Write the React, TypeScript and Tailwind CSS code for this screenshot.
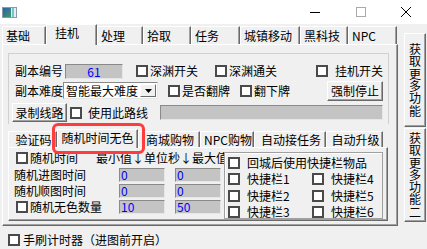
import React from "react";

const font = "font-['Noto_Sans_CJK_SC','Noto_Sans',sans-serif]";

const outerTabs = [
  { label: "基础", w: "w-[44px]" },
  { label: "挂机", w: "w-[51px]", active: true },
  { label: "处理", w: "w-[46px]" },
  { label: "拾取", w: "w-[48px]" },
  { label: "任务", w: "w-[49px]" },
  { label: "城镇移动", w: "w-[60px]" },
  { label: "黑科技", w: "w-[48px]" },
  { label: "NPC", w: "w-[49px]" },
];

const innerTabs = [
  { label: "验证码", w: "w-[49px]" },
  { label: "随机时间无色", w: "w-[81px]", active: true },
  { label: "商城购物", w: "w-[62px]" },
  { label: "NPC购物", w: "w-[54px]" },
  { label: "自动接任务", w: "w-[72px]" },
  { label: "自动升级", w: "w-[57px]" },
];

function Box() {
  return <span className="block w-[12px] h-[12px] shrink-0 border-2 border-[#4a4a4a] bg-white" />;
}

function Check({ label, className = "" }: { label: string; className?: string }) {
  return (
    <div className={"flex items-center whitespace-nowrap " + className}>
      <Box />
      <span>{label}</span>
    </div>
  );
}

function Field({ value, className = "" }: { value: string; className?: string }) {
  return (
    <div
      className={
        "h-[14px] bg-[#c4c4c4] border border-t-[#8a8a8a] border-l-[#8a8a8a] border-b-[#e6e6e6] border-r-[#e6e6e6] text-[#0000ff] text-[12px] leading-[12px] pl-[1px] " +
        className
      }
    >
      {value}
    </div>
  );
}

function Btn({ label, className = "" }: { label: string; className?: string }) {
  return (
    <div
      className={
        "flex items-center justify-center bg-[#f0f0f0] border border-t-white border-l-white border-b-[#696969] border-r-[#696969] shadow-[inset_-1px_-1px_0_#a0a0a0] " +
        className
      }
    >
      {label}
    </div>
  );
}

function TabStrip({ tabs, small }: { tabs: { label: string; w: string; active?: boolean }[]; small?: boolean }) {
  return (
    <div className={"flex items-end " + (small ? "h-[18px]" : "h-[20px]")}>
      {tabs.map((t) =>
        t.active ? (
          <div
            key={t.label}
            className={
              t.w +
              " relative z-10 -mb-px bg-[#f0f0f0] border-t border-l border-t-white border-l-white border-r border-r-[#696969] shadow-[inset_-1px_0_0_#a0a0a0] flex pt-[1px] " +
              (small ? "h-[19px] justify-center" : "h-[21px] pl-[8px]")
            }
          >
            {t.label}
          </div>
        ) : (
          <div
            key={t.label}
            className={
              t.w +
              " bg-[#f0f0f0] border-t border-l border-t-white border-l-white border-r border-r-[#696969] shadow-[inset_-1px_0_0_#a0a0a0] flex " +
              (small ? "h-[16px] leading-[15px] justify-center pl-[2px]" : "h-[18px] leading-[17px] pl-[3px]")
            }
          >
            {t.label}
          </div>
        )
      )}
    </div>
  );
}

function VButton({ text }: { text: string }) {
  return (
    <div className="w-[22px] h-[94px] bg-[#f0f0f0] border border-t-white border-l-white border-b-[#696969] border-r-[#696969] shadow-[inset_-1px_-1px_0_#a0a0a0] flex items-center justify-center">
      <div className="w-[12px] break-all leading-[12.3px] text-[12px]">{text}</div>
    </div>
  );
}

export default function App() {
  return (
    <div className={"relative w-[427px] h-[249px] bg-[#f0f0f0] text-[12px] leading-[14px] text-black overflow-hidden " + font}>
      {/* title bar */}
      <div className="h-[24px] bg-white flex items-center">
        <svg width="15" height="11" viewBox="0 0 15 11" className="ml-[2px]">
          <defs>
            <linearGradient id="ig" x1="0" y1="0" x2="1" y2="1">
              <stop offset="0" stopColor="#2f5fa8" />
              <stop offset="1" stopColor="#3f9a68" />
            </linearGradient>
          </defs>
          <rect x="0.5" y="0.5" width="14" height="10" fill="#e8eef2" stroke="#8a9aa8" />
          <rect x="1" y="1" width="8" height="9" fill="url(#ig)" />
          <rect x="10" y="1" width="2" height="9" fill="#6fc6d8" />
        </svg>
        <div className="ml-auto flex items-center">
          <svg width="12" height="12" viewBox="0 0 12 12" className="mr-[34px]">
            <line x1="1" y1="6.5" x2="11" y2="6.5" stroke="#000" strokeWidth="1" />
          </svg>
          <svg width="12" height="12" viewBox="0 0 12 12" className="mr-[33px]">
            <rect x="1.5" y="1.5" width="9" height="9" fill="none" stroke="#aaa" />
          </svg>
          <svg width="12" height="12" viewBox="0 0 12 12" className="mr-[15px]">
            <path d="M1 1L11 11M11 1L1 11" stroke="#000" strokeWidth="1" />
          </svg>
        </div>
      </div>

      <div className="flex">
        {/* main tab control */}
        <div className="ml-[2px] w-[396px] flex flex-col">
          <TabStrip tabs={outerTabs} />
          <div className="h-[182px] border border-t-white border-l-white border-b-[#696969] border-r-[#696969] shadow-[inset_-1px_-1px_0_#a0a0a0]">
            {/* group box */}
            <div className="mt-[8px] ml-[5px] w-[381px] h-[71px] border-t border-l border-r border-[#d0d0d0] pt-[9px] pl-[6px]">
              <div className="flex items-center h-[16px]">
                <span className="w-[48px]">副本编号</span>
                <div className="ml-[2px] w-[58px] h-[15px] bg-[#c4c4c4] border border-t-[#8a8a8a] border-l-[#8a8a8a] border-b-[#e6e6e6] border-r-[#e6e6e6] text-[#0000ff] text-center leading-[13px]">
                  61
                </div>
                <Check label="深渊开关" className="ml-[13px] gap-[2px]" />
                <Check label="深渊通关" className="ml-[17px] gap-[2px]" />
                <Check label="挂机开关" className="ml-[39px] gap-[7px]" />
              </div>
              <div className="flex items-center h-[17px] mt-[3px]">
                <span className="w-[48px]">副本难度</span>
                <div className="w-[95px] h-[17px] bg-white border border-t-[#8a8a8a] border-l-[#8a8a8a] border-b-[#e6e6e6] border-r-[#e6e6e6] flex items-center">
                  <span className="ml-[2px] text-[12px] whitespace-nowrap">智能最大难度</span>
                  <div className="ml-auto mr-[1px] w-[16px] h-[13px] bg-[#f0f0f0] border border-t-white border-l-white border-b-[#696969] border-r-[#696969] flex items-center justify-center">
                    <svg width="7" height="4" viewBox="0 0 7 4">
                      <path d="M0 0H7L3.5 4Z" fill="#000" />
                    </svg>
                  </div>
                </div>
                <Check label="是否翻牌" className="ml-[10px] gap-[2px]" />
                <Check label="翻下牌" className="ml-[10px] gap-[2px]" />
                <Btn label="强制停止" className="ml-[37px] w-[56px] h-[20px]" />
              </div>
              <div className="flex items-center h-[19px] mt-[4px] -ml-[3px]">
                <Btn label="录制线路" className="w-[55px] h-[19px]" />
                <Check label="使用此路线" className="ml-[3px] gap-[6px]" />
                <div className="ml-[12px] w-[223px] h-[15px] bg-[#c4c4c4] border border-t-[#8a8a8a] border-l-[#8a8a8a] border-b-[#e6e6e6] border-r-[#e6e6e6]" />
              </div>
            </div>

            {/* inner tab control */}
            <div className="mt-[5px] ml-[5px] w-[380px]">
              <TabStrip tabs={innerTabs} small />
              <div className="h-[74px] border border-t-white border-l-white border-b-[#696969] border-r-[#696969] shadow-[inset_-1px_-1px_0_#a0a0a0] flex">
                <div className="w-[215px] pl-[5px] pt-[2px]">
                  <div className="flex items-center h-[16px] whitespace-nowrap">
                    <Check label="随机时间" className="ml-[2px] gap-[2px]" />
                    <span className="ml-[18px]">最小值↓单位秒↓最大值</span>
                  </div>
                  <div className="flex items-center h-[16px] mt-[1px]">
                    <span className="w-[105px]">随机进图时间</span>
                    <Field value="0" className="w-[46px]" />
                    <Field value="0" className="ml-[10px] w-[46px]" />
                  </div>
                  <div className="flex items-center h-[16px]">
                    <span className="w-[105px]">随机顺图时间</span>
                    <Field value="0" className="w-[46px]" />
                    <Field value="0" className="ml-[10px] w-[46px]" />
                  </div>
                  <div className="flex items-center h-[16px]">
                    <div className="w-[103px] ml-[2px]">
                      <Check label="随机无色数量" className="gap-[2px]" />
                    </div>
                    <Field value="10" className="w-[46px]" />
                    <Field value="50" className="ml-[10px] w-[46px]" />
                  </div>
                </div>
                <div className="relative z-10 mt-[4px] w-[159px] h-[67px] bg-[#f0f0f0] border border-[#a0a0a0] shadow-[inset_1px_1px_0_#fff] pl-[3px] pt-[2px]">
                  <div className="flex items-center h-[16px]">
                    <Check label="回城后使用快捷栏物品" className="gap-[7px]" />
                  </div>
                  {[
                    ["快捷栏1", "快捷栏4"],
                    ["快捷栏2", "快捷栏5"],
                    ["快捷栏3", "快捷栏6"],
                  ].map((r, i) => (
                    <div key={r[0]} className={"flex items-center h-[16px] " + (i === 1 ? "mt-[1px]" : "")}>
                      <div className="w-[84px]">
                        <Check label={r[0]} className="gap-[7px]" />
                      </div>
                      <Check label={r[1]} className="gap-[7px]" />
                    </div>
                  ))}
                </div>
              </div>
            </div>
          </div>
        </div>

        {/* side buttons */}
        <div className="ml-[6px] pt-[9px] flex flex-col gap-[1px]">
          <VButton text="获取更多功能" />
          <VButton text="获取更多功能二" />
        </div>
      </div>

      <div className="mt-[7px] ml-[8px]">
        <Check label="手刷计时器（进图前开启）" className="gap-[3px]" />
      </div>

      {/* annotation */}
      <div className="absolute left-[52px] top-[123px] w-[93px] h-[31px] border-[3px] border-[#ff3b3b] rounded-[6px]" />
    </div>
  );
}
